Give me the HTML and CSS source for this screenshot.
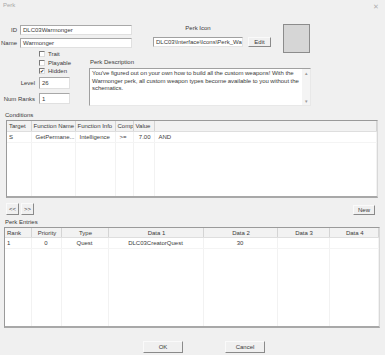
FILE: index.html
```html
<!DOCTYPE html>
<html>
<head>
    <title>Perk</title>
    <meta name='viewport' content='width=device-width, initial-scale=1'>
    <link rel="stylesheet" href="styles.css">
</head>
<body>
    <div class="dialog">
        <div class="titlebar">
            <span class="title">Perk</span>
            <span class="close">&#x2715;</span>
        </div>

        <div class="top">
            <div class="ident">
                <div class="field"><span class="field-label">ID</span><div class="edit ident-edit">DLC03Warmonger</div></div>
                <div class="field"><span class="field-label">Name</span><div class="edit ident-edit">Warmonger</div></div>
            </div>
            <div class="icon-group">
                <div class="icon-label">Perk Icon</div>
                <div class="icon-row">
                    <div class="edit path-edit">DLC03\Interface\Icons\Perk_Wa</div>
                    <button class="btn edit-btn">Edit</button>
                </div>
            </div>
            <div class="icon-preview"></div>
        </div>

        <div class="middle">
            <div class="flags">
                <div class="check"><span class="box"></span>Trait</div>
                <div class="check"><span class="box"></span>Playable</div>
                <div class="check"><span class="box checked">&#x2714;</span>Hidden</div>
                <div class="num level"><span class="num-label">Level</span><div class="edit num-edit">26</div></div>
                <div class="num ranks"><span class="num-label">Num Ranks</span><div class="edit num-edit">1</div></div>
            </div>
            <div class="desc">
                <div class="desc-label">Perk Description</div>
                <div class="desc-box">
                    <div class="desc-text">You've figured out on your own how to build all the custom weapons! With the Warmonger perk, all custom weapon types become available to you without the schematics.</div>
                    <div class="scrollbar"><span>&#x25B4;</span><span>&#x25BE;</span></div>
                </div>
            </div>
        </div>

        <div class="group-label">Conditions</div>
        <div class="list conditions">
            <table>
                <colgroup>
                    <col style="width:24px"><col style="width:44px"><col style="width:40px"><col style="width:18px"><col style="width:21px"><col>
                </colgroup>
                <thead>
                    <tr><th>Target</th><th>Function Name</th><th>Function Info</th><th>Comp</th><th>Value</th><th></th></tr>
                </thead>
                <tbody>
                    <tr class="data"><td>S</td><td class="pad">GetPermane...</td><td class="pad">Intelligence</td><td class="pad">&gt;=</td><td class="right">7.00</td><td class="pad">AND</td></tr>
                    <tr class="filler"><td></td><td></td><td></td><td></td><td></td><td></td></tr>
                </tbody>
            </table>
        </div>

        <div class="list-tools">
            <div class="pager">
                <button class="btn page-btn">&lt;&lt;</button>
                <button class="btn page-btn">&gt;&gt;</button>
            </div>
            <button class="btn new-btn">New</button>
        </div>

        <div class="group-label">Perk Entries</div>
        <div class="list entries">
            <table>
                <colgroup>
                    <col style="width:26px"><col style="width:30px"><col style="width:47px"><col style="width:95px"><col style="width:74px"><col style="width:52px"><col>
                </colgroup>
                <thead>
                    <tr><th class="left">Rank</th><th>Priority</th><th>Type</th><th>Data 1</th><th>Data 2</th><th>Data 3</th><th>Data 4</th></tr>
                </thead>
                <tbody>
                    <tr class="data"><td>1</td><td class="center">0</td><td class="center">Quest</td><td class="center">DLC03CreatorQuest</td><td class="center">30</td><td></td><td></td></tr>
                    <tr class="filler"><td></td><td></td><td></td><td></td><td></td><td></td><td></td></tr>
                </tbody>
            </table>
        </div>

        <div class="actions">
            <button class="btn action-btn">OK</button>
            <button class="btn action-btn">Cancel</button>
        </div>
    </div>
</body>
</html>
```

FILE: styles.css
```css
html, body {
    margin: 0;
    padding: 0;
    background: #f0f0f0;
}
body {
    width: 385px;
    height: 355px;
    overflow: hidden;
    font-family: "Liberation Sans", Arial, sans-serif;
    font-size: 6px;
    color: #3a3a3a;
}
.dialog {
    width: 385px;
}

/* title bar */
.titlebar {
    height: 20px;
    display: flex;
    justify-content: space-between;
    padding: 2px 6px 0 3px;
    box-sizing: border-box;
    line-height: 7px;
    color: #a8a8a8;
}
.close {
    font-size: 7px;
    color: #b0b0b0;
    padding-top: 1px;
}

/* generic controls */
.edit {
    box-sizing: border-box;
    background: #fff;
    border: 1px solid #a8a8a8;
    border-right-color: #e0e0e0;
    border-bottom-color: #e0e0e0;
    padding: 0 2px;
    white-space: nowrap;
    overflow: hidden;
    display: flex;
    align-items: center;
}
.btn {
    box-sizing: border-box;
    font-family: inherit;
    font-size: 6px;
    color: #3a3a3a;
    background: #f0f0f0;
    border: 1px solid;
    border-color: #fafafa #8a8a8a #8a8a8a #fafafa;
    padding: 0;
    margin: 0;
    line-height: 1;
}

/* ID / Name / icon */
.top {
    display: flex;
    height: 30px;
}
.ident {
    width: 132px;
    padding-top: 5px;
}
.field {
    display: flex;
    height: 10px;
    margin-bottom: 3px;
}
.field-label {
    width: 20px;
    padding-right: 3px;
    box-sizing: border-box;
    text-align: right;
    line-height: 10px;
}
.ident-edit {
    width: 112px;
}
.icon-group {
    margin-left: 21px;
    padding-top: 5px;
}
.icon-label {
    width: 90px;
    text-align: center;
    line-height: 7px;
}
.icon-row {
    display: flex;
    margin-top: 5px;
    height: 10px;
}
.path-edit {
    width: 90px;
    border-color: #a0a0a0 #e4e4e4 #e4e4e4 #a0a0a0;
}
.edit-btn {
    width: 23px;
    height: 10px;
    margin-left: 5px;
}
.icon-preview {
    width: 27px;
    height: 29px;
    margin: 4px 0 0 12px;
    box-sizing: border-box;
    border: 1px solid #8c8c8c;
    background: #d6d6d6;
}

/* flags + description */
.middle {
    display: flex;
    height: 58px;
}
.flags {
    width: 89px;
}
.check {
    height: 8.5px;
    display: flex;
    align-items: center;
    padding-left: 39px;
}
.box {
    width: 6px;
    height: 6px;
    box-sizing: border-box;
    border: 1px solid #7a7a7a;
    border-right-color: #dcdcdc;
    border-bottom-color: #dcdcdc;
    background: #fff;
    margin-right: 3px;
    font-size: 5px;
    line-height: 4px;
    text-align: center;
    color: #222;
    overflow: hidden;
}
.num {
    display: flex;
}
.level {
    margin-top: 1.5px;
    height: 12px;
}
.ranks {
    margin-top: 4px;
    height: 11px;
}
.num-label {
    width: 39px;
    padding-right: 4px;
    box-sizing: border-box;
    text-align: right;
    align-self: center;
}
.num-edit {
    width: 31px;
}
.desc {
    width: 222px;
}
.desc-label {
    margin-top: 9px;
    padding-left: 1px;
    line-height: 7px;
}
.desc-box {
    margin-top: 2px;
    height: 38px;
    box-sizing: border-box;
    border: 1px solid #a0a0a0;
    border-right-color: #e8e8e8;
    border-bottom-color: #e8e8e8;
    background: #fff;
    display: flex;
}
.desc-text {
    flex: 1;
    padding: 1px 0 1px 2px;
    line-height: 7.5px;
    letter-spacing: -0.05px;
}
.scrollbar {
    width: 8px;
    background: #f4f4f4;
    display: flex;
    flex-direction: column;
    justify-content: space-between;
    align-items: center;
    font-size: 5px;
    color: #9a9a9a;
    padding: 1px 0;
}

/* lists */
.group-label {
    padding: 3px 0 0 5px;
    line-height: 8px;
    height: 12px;
    box-sizing: border-box;
}
.list {
    box-sizing: border-box;
    background: #fff;
    border: 1px solid #9a9a9a;
    border-right-color: #d8d8d8;
    border-bottom: 2px solid #a8a8a8;
}
.list table {
    width: 100%;
    height: 100%;
    table-layout: fixed;
    border-collapse: collapse;
}
.list th {
    height: 10px;
    padding: 0 0 0 2px;
    font-weight: normal;
    background: #f2f2f2;
    border-right: 1px solid #d4d4d4;
    border-bottom: 1px solid #dedede;
    white-space: nowrap;
    overflow: hidden;
    text-align: center;
}
.list td {
    padding: 0 2px;
    border-right: 1px solid #f2f2f2;
    white-space: nowrap;
    overflow: hidden;
    vertical-align: middle;
}
.list tr.data td {
    height: 10px;
    border-bottom: 1px solid #f4f4f4;
}
.list td.pad {
    padding-left: 4px;
}
.list td.right {
    text-align: right;
    padding-right: 3px;
}
.list td.center {
    text-align: center;
}
.list th.left {
    text-align: left;
}
.conditions {
    margin-left: 6px;
    width: 372px;
    height: 78px;
}
.conditions th {
    text-align: left;
}
.entries {
    margin-left: 4px;
    width: 376px;
    height: 101px;
}
.entries th {
    height: 9px;
}

.list-tools {
    height: 17px;
    display: flex;
    justify-content: space-between;
    align-items: flex-end;
    padding: 0 10px 0 6px;
}
.pager {
    display: flex;
    gap: 2px;
}
.page-btn {
    width: 13px;
    height: 12px;
}
.new-btn {
    width: 22px;
    height: 10px;
}

.actions {
    display: flex;
    gap: 42px;
    margin: 13px 0 0 143px;
}
.action-btn {
    width: 40px;
    height: 12px;
}
```
